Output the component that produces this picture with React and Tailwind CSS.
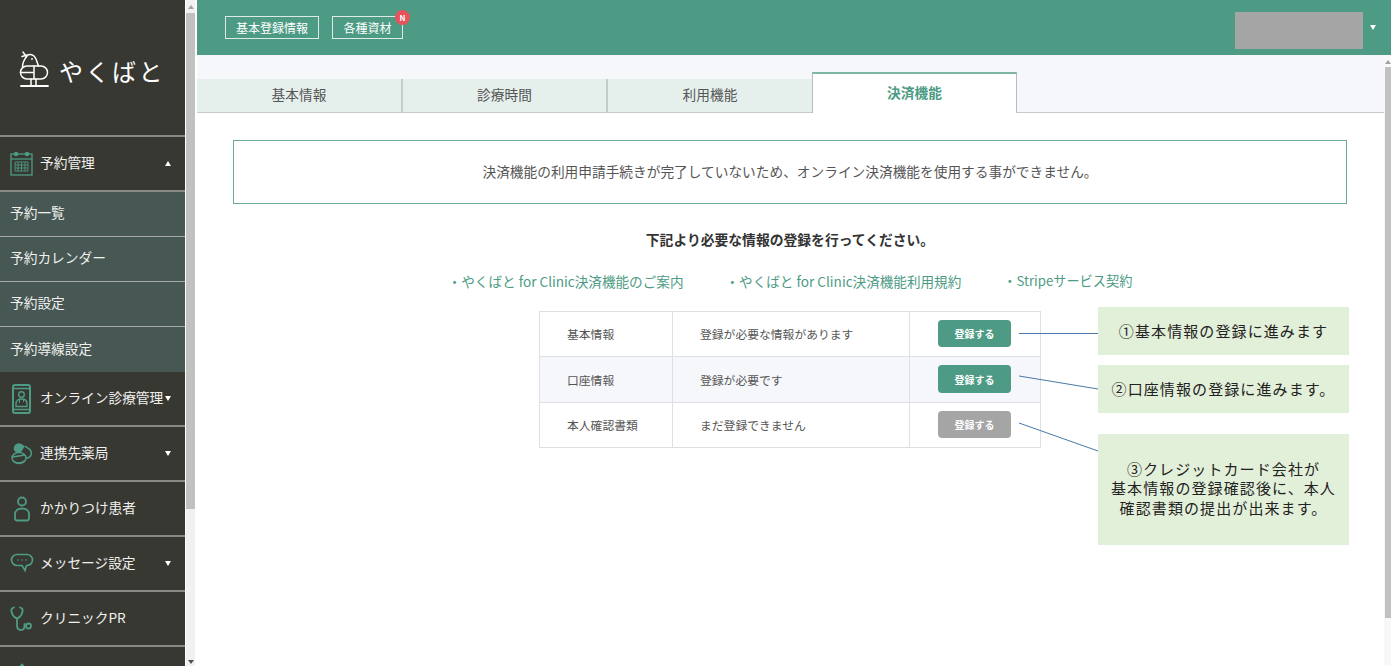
const jp = "font-['Noto_Sans_CJK_JP','Liberation_Sans',sans-serif]";

function Caret({ up = false, className = "" }) {
  return (
    <span
      className={`block w-0 h-0 border-x-[3.5px] border-x-transparent ${
        up ? "border-b-[5px] border-b-white" : "border-t-[5px] border-t-white"
      } ${className}`}
    />
  );
}

function Logo() {
  return (
    <svg width="32" height="38" viewBox="0 0 32 38" fill="none" stroke="#fff" strokeWidth="1.5" strokeLinecap="round">
      <path d="M4 2l3.500 5M3 6.500l5-1.500" />
      <path d="M8 5.500C11 3.500 15 4.500 17 9l2.500 7" />
      <path d="M8 6C5.500 9 3.500 13 3.500 17" />
      <circle cx="13" cy="9" r="0.9" fill="#fff" stroke="none" />
      <rect x="1.500" y="16" width="27" height="13" rx="6.500" />
      <path d="M1.500 22.500H15M15 16v13" />
      <path d="M12 29v7M17 29v7" />
      <path d="M2 36h27" strokeWidth="1.800" />
    </svg>
  );
}

function CalendarIcon() {
  return (
    <svg width="23" height="25" viewBox="0 0 23 25" fill="none" stroke="#4d9b84" strokeWidth="1.300">
      <rect x="1" y="3" width="21" height="21" />
      <path d="M1 8h21" />
      <circle cx="6" cy="3" r="1.600" fill="#4d9b84" />
      <circle cx="17" cy="3" r="1.600" fill="#4d9b84" />
      <path d="M5 11h13v9H5zM5 14h13M5 17h13M8 11v9M11.500 11v9M15 11v9" strokeWidth="0.900" />
    </svg>
  );
}

function PhoneDoctorIcon() {
  return (
    <svg width="19" height="30" viewBox="0 0 19 30" fill="none" stroke="#4d9b84" strokeWidth="2">
      <rect x="1" y="1" width="17" height="28" rx="2" />
      <path d="M1 4.500h17M1 25.500h17" strokeWidth="1.400" />
      <circle cx="9.500" cy="10.500" r="2.800" strokeWidth="1.400" />
      <path d="M4 22.500v-3c0-2.500 2-4.500 5.500-4.500s5.500 2 5.500 4.500v3z" strokeWidth="1.400" />
      <path d="M7.500 15v4M11.500 15v3" strokeWidth="1" />
    </svg>
  );
}

function PillIcon() {
  return (
    <svg width="22" height="22" viewBox="0 0 22 22" fill="none">
      <g transform="rotate(32 12 8)">
        <path d="M11 3H7a5 5 0 000 10h4z" fill="#4d9b84" />
        <path d="M11 3h5a5 5 0 010 10h-5" stroke="#4d9b84" strokeWidth="1.500" />
      </g>
      <ellipse cx="8" cy="15" rx="7" ry="5.500" fill="#383832" stroke="#4d9b84" strokeWidth="1.500" />
      <path d="M1.500 14l12.500-2M2 18c3 2.500 9 2.500 12-.5" stroke="#4d9b84" strokeWidth="1.300" />
    </svg>
  );
}

function PersonIcon() {
  return (
    <svg width="18" height="26" viewBox="0 0 18 26" fill="none" stroke="#4d9b84" strokeWidth="1.800">
      <circle cx="9" cy="5.500" r="4" />
      <path d="M2 22v-4c0-3 2.500-5.500 7-5.500s7 2.500 7 5.500v4c0 1.500-.8 2.500-2 2.500H4c-1.200 0-2-1-2-2.500z" />
    </svg>
  );
}

function ChatIcon() {
  return (
    <svg width="24" height="21" viewBox="0 0 24 21" fill="none" stroke="#4d9b84" strokeWidth="1.700">
      <path d="M7 1.500h10c3 0 5.500 2.500 5.500 5.500s-2.500 5.500-5.500 5.500h-.5l-1.500 5-3-5H7C4 12.500 1.500 10 1.500 7S4 1.500 7 1.500z" />
      <circle cx="8" cy="7" r=".8" fill="#4d9b84" stroke="none" />
      <circle cx="12" cy="7" r=".8" fill="#4d9b84" stroke="none" />
      <circle cx="16" cy="7" r=".8" fill="#4d9b84" stroke="none" />
    </svg>
  );
}

function StethoscopeIcon() {
  return (
    <svg width="23" height="26" viewBox="0 0 23 26" fill="none" stroke="#4d9b84" strokeWidth="1.800" strokeLinecap="round">
      <path d="M4 1.500C2 2 1 3.500 1.500 5.500c.5 3 3 6 5.500 7 2.500-1 5-4 5.500-7C13 3.500 12 2 10 1.500" />
      <path d="M7 12.500v7c0 2.500 1.500 4.500 4 4.500s3.500-2 3.500-4v-2" />
      <circle cx="18.500" cy="20" r="2.500" />
    </svg>
  );
}

function HomeIcon() {
  return (
    <svg width="20" height="24" viewBox="0 0 20 24" fill="none" stroke="#4d9b84" strokeWidth="1.600">
      <path d="M1.500 10L10 1.500l8.500 8.500M4 8v14h12V8" />
    </svg>
  );
}

function NavItem({ icon, label, caret, up, last }) {
  return (
    <div className={`h-[55px] shrink-0 flex items-center relative ${last ? "" : "border-b-2 border-[#8a8a84]"}`}>
      <span className="w-[40px] flex justify-center pl-[3px] shrink-0">{icon}</span>
      <span className="text-[13.700px] text-[#f0f0ee] whitespace-nowrap pb-[2px]">{label}</span>
      {caret && <Caret up={up} className="absolute right-[14px] top-[24px]" />}
    </div>
  );
}

function Sidebar() {
  const sub = ["予約一覧", "予約カレンダー", "予約設定", "予約導線設定"];
  return (
    <aside className="w-[185px] h-full shrink-0 bg-[#383832] overflow-hidden">
      <div className="h-[132px] flex items-center pl-[19px] pt-[3px] border-b-2 border-[#8a8a84] box-content">
        <Logo />
        <span className="ml-[8px] mt-[4px] text-[24px] text-white tracking-[2.500px] leading-none whitespace-nowrap">やくばと</span>
      </div>
      <NavItem icon={<CalendarIcon />} label="予約管理" caret up />
      <div className="bg-[#475753]">
        {sub.map((s, i) => (
          <div
            key={s}
            className={`h-[45px] flex items-center pl-[10px] pb-[3px] text-[13.700px] text-[#f0f0ee] ${
              i < 3 ? "border-b border-[#a4aaa6]" : ""
            }`}
          >
            {s}
          </div>
        ))}
      </div>
      <NavItem icon={<PhoneDoctorIcon />} label="オンライン診療管理" caret />
      <NavItem icon={<PillIcon />} label="連携先薬局" caret />
      <NavItem icon={<PersonIcon />} label="かかりつけ患者" />
      <NavItem icon={<ChatIcon />} label="メッセージ設定" caret />
      <NavItem icon={<StethoscopeIcon />} label="クリニックPR" />
      <NavItem icon={<HomeIcon />} label="" last />
    </aside>
  );
}

function Scrollbar({ thumbTop, thumbHeight, className = "", thumbClass = "", noDownArrow }) {
  return (
    <div className={`relative shrink-0 h-full flex flex-col justify-between items-center ${className}`}>
      <span className="mt-[5px] w-0 h-0 border-x-[3px] border-x-transparent border-b-[4px] border-b-[#a3a3a3]" />
      {!noDownArrow && (
        <span className="mb-[2px] w-0 h-0 border-x-[3px] border-x-transparent border-t-[4px] border-t-[#505050]" />
      )}
      <div className={`absolute bg-[#c1c1c1] ${thumbClass}`} style={{ top: thumbTop, height: thumbHeight }} />
    </div>
  );
}

function Tab({ label, className = "" }) {
  return (
    <div className={`h-[33px] flex items-center justify-center pb-[2px] bg-[#e5efec] border-[#c6cbc9] text-[13.700px] text-[#555] ${className}`}>
      {label}
    </div>
  );
}

function ActiveTab({ label }) {
  return (
    <div className="w-[205px] h-[41px] -mb-px relative z-10 flex items-center justify-center pb-[2px] bg-white border-t-2 border-x border-t-[#7fb5a5] border-x-[#b4bdb9] text-[13.700px] font-bold text-[#4d9b84]">
      {label}
    </div>
  );
}

function Row({ name, status, disabled, className = "", btnClass = "h-[27px]" }) {
  return (
    <div className={`flex text-[11.800px] text-[#555] ${className}`}>
      <div className="w-[133px] flex items-center pl-[27px] border-r border-[#dcdfe3]">{name}</div>
      <div className="w-[237px] flex items-center pl-[27px] border-r border-[#dcdfe3]">{status}</div>
      <div className="flex-1 flex items-center pl-[28px] pb-[1px]">
        <button
          type="button"
          className={`w-[73px] rounded-[4px] text-[10px] font-bold text-white ${btnClass} ${disabled ? "bg-[#a5a5a5]" : "bg-[#4d9b84]"}`}
        >
          登録する
        </button>
      </div>
    </div>
  );
}

function Callout({ className = "", children }) {
  return (
    <div className={`absolute left-[1098px] w-[251px] bg-[#e2efd9] flex items-center justify-center text-center text-[15px] leading-[19.500px] tracking-[1.100px] text-[#222] ${className}`}>
      {children}
    </div>
  );
}

export default function App() {
  return (
    <div className={`relative w-[1393px] h-[666px] overflow-hidden bg-white ${jp}`}>
      <div className="w-[1391px] h-full flex">
        <Sidebar />
        <Scrollbar thumbTop={13} thumbHeight={496} className="w-[12px] bg-[#f1f1f1] border-r-2 border-white border-l border-l-white" thumbClass="left-0 right-0" />

        <div className="flex-1 min-w-0 flex flex-col">
          <header className="h-[55px] shrink-0 bg-[#4d9b84] flex items-center pl-[28px] pr-[15px]">
            <div className="h-[23px] w-[94px] flex items-center justify-center border border-[#dcebe6] text-[12px] text-white">基本登録情報</div>
            <div className="relative ml-[13px] h-[23px] w-[71px] flex items-center justify-center border border-[#dcebe6] text-[12px] text-white">
              各種資材
              <span className="absolute -top-[7px] -right-[8px] w-[15px] h-[15px] rounded-full bg-[#e8525a] text-white text-[8px] font-bold flex items-center justify-center">N</span>
            </div>
            <div className="ml-auto w-[128px] h-[37px] bg-[#a5a5a5] mt-[6px]" />
            <Caret className="ml-[7px]" />
          </header>

          <div className="flex-1 min-h-0 flex">
            <main className="flex-1 min-w-0">
              <div className="h-[58px] bg-[#f5f7fa] border-b border-[#c6cbc9] flex items-end">
                <Tab label="基本情報" className="w-[206px] border-r-2" />
                <Tab label="診療時間" className="w-[205px] border-r-2" />
                <Tab label="利用機能" className="w-[204px]" />
                <ActiveTab label="決済機能" />
              </div>

              <div className="pl-[36px] pt-[27px] pr-[37px]">
                <div className="h-[64px] border border-[#6aad99] flex items-center justify-center pb-[2px] text-[13.700px] text-[#555]">
                  決済機能の利用申請手続きが完了していないため、オンライン決済機能を使用する事ができません。
                </div>
                <p className="mt-[26px] text-center text-[13.800px] font-bold text-[#333] leading-[19px]">
                  下記より必要な情報の登録を行ってください。
                </p>
                <div className="mt-[22px] flex justify-center gap-[42px] text-[13.600px] leading-[20px] text-[#4d9b84] whitespace-nowrap">
                  <span>・やくばと for Clinic決済機能のご案内</span>
                  <span>・やくばと for Clinic決済機能利用規約</span>
                  <span className="text-[13.200px]">・Stripeサービス契約</span>
                </div>
                <div className="mt-[20px] ml-[306px] w-[502px] border border-[#dcdfe3]">
                  <Row name="基本情報" status="登録が必要な情報があります" className="h-[45px] bg-white border-b border-[#dcdfe3]" />
                  <Row name="口座情報" status="登録が必要です" btnClass="h-[28px]" className="h-[46px] bg-[#f5f7fa] border-b border-[#dcdfe3]" />
                  <Row name="本人確認書類" status="まだ登録できません" disabled className="h-[44px] bg-white" />
                </div>
              </div>
            </main>
            <Scrollbar thumbTop={12} thumbHeight={551} noDownArrow className="w-[7px] bg-[#f8f8f8]" thumbClass="left-[1px] right-0" />
          </div>
        </div>
      </div>

      {/* annotations laid over the screenshot */}
      <svg className="absolute inset-0 pointer-events-none" width="1393" height="666" fill="none" stroke="#4a78a8" strokeWidth="1">
        <path d="M1019 333.500H1098M1019 376L1098 389M1019 423L1098 451" />
      </svg>
      <Callout className="top-[307px] h-[48px]">①基本情報の登録に進みます</Callout>
      <Callout className="top-[365px] h-[48px]">②口座情報の登録に進みます。</Callout>
      <Callout className="top-[434px] h-[111px]">
        <span className="-mt-[3px]">
          ③クレジットカード会社が
          <br />
          基本情報の登録確認後に、本人
          <br />
          確認書類の提出が出来ます。
        </span>
      </Callout>
    </div>
  );
}
